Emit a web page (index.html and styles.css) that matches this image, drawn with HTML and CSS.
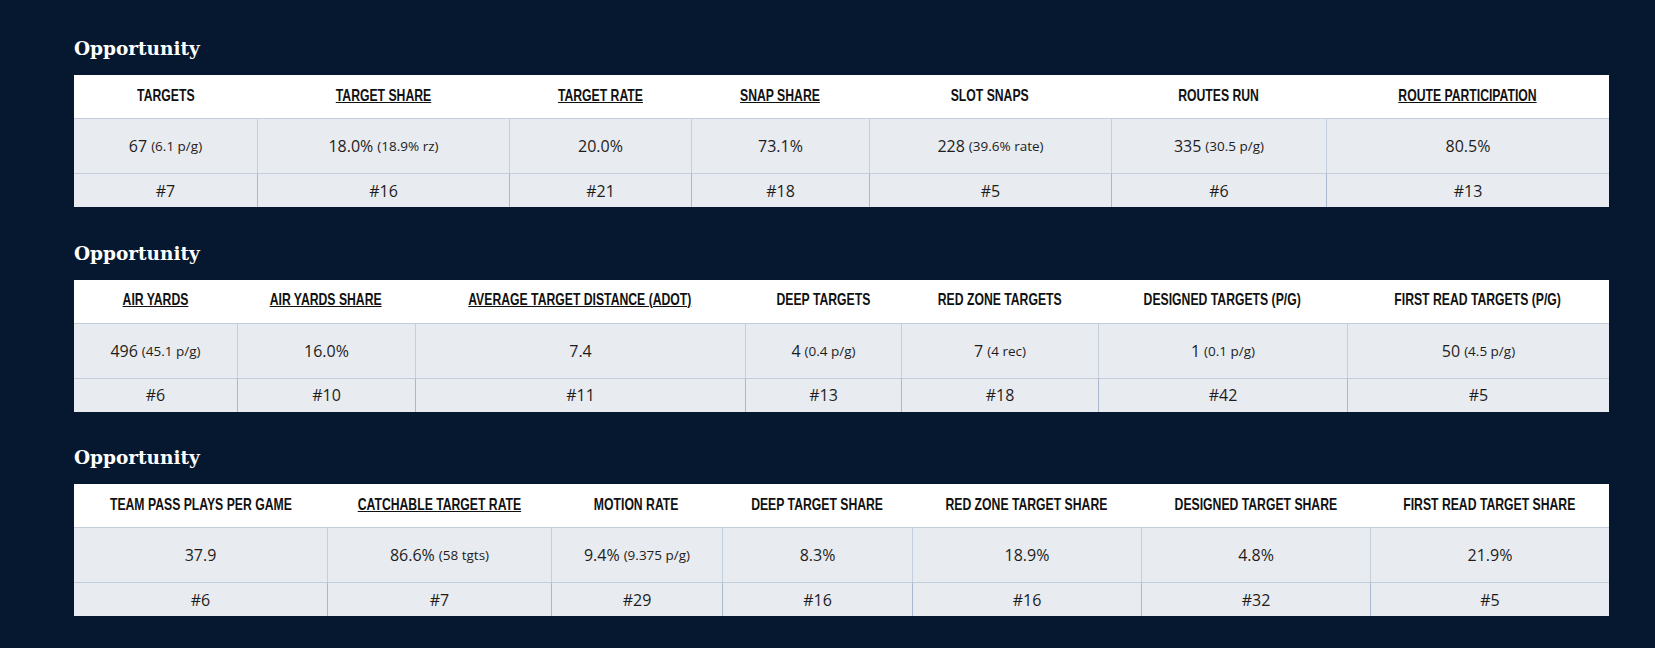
FILE: index.html
```html
<!DOCTYPE html>
<html lang="en">
<head>
<meta charset="utf-8">
<title>Opportunity</title>
<link rel="stylesheet" href="styles.css">
</head>
<body>
<main class="page">
  <section class="block">
    <h2 class="block-title">Opportunity</h2>
    <div class="stats stats--one">
      <div class="head"><span class="label">TARGETS</span></div>
      <div class="head"><a class="label tip">TARGET SHARE</a></div>
      <div class="head"><a class="label tip">TARGET RATE</a></div>
      <div class="head"><a class="label tip">SNAP SHARE</a></div>
      <div class="head"><span class="label">SLOT SNAPS</span></div>
      <div class="head"><span class="label">ROUTES RUN</span></div>
      <div class="head"><a class="label tip">ROUTE PARTICIPATION</a></div>

      <div class="val first">67 <small>(6.1 p/g)</small></div>
      <div class="val">18.0% <small>(18.9% rz)</small></div>
      <div class="val">20.0%</div>
      <div class="val">73.1%</div>
      <div class="val">228 <small>(39.6% rate)</small></div>
      <div class="val">335 <small>(30.5 p/g)</small></div>
      <div class="val">80.5%</div>

      <div class="rank first">#7</div>
      <div class="rank">#16</div>
      <div class="rank">#21</div>
      <div class="rank">#18</div>
      <div class="rank">#5</div>
      <div class="rank">#6</div>
      <div class="rank">#13</div>
    </div>
  </section>

  <section class="block">
    <h2 class="block-title">Opportunity</h2>
    <div class="stats stats--two">
      <div class="head"><a class="label tip">AIR YARDS</a></div>
      <div class="head"><a class="label tip">AIR YARDS SHARE</a></div>
      <div class="head"><a class="label tip">AVERAGE TARGET DISTANCE (ADOT)</a></div>
      <div class="head"><span class="label">DEEP TARGETS</span></div>
      <div class="head"><span class="label">RED ZONE TARGETS</span></div>
      <div class="head"><span class="label">DESIGNED TARGETS (P/G)</span></div>
      <div class="head"><span class="label">FIRST READ TARGETS (P/G)</span></div>

      <div class="val first">496 <small>(45.1 p/g)</small></div>
      <div class="val">16.0%</div>
      <div class="val">7.4</div>
      <div class="val">4 <small>(0.4 p/g)</small></div>
      <div class="val">7 <small>(4 rec)</small></div>
      <div class="val">1 <small>(0.1 p/g)</small></div>
      <div class="val">50 <small>(4.5 p/g)</small></div>

      <div class="rank first">#6</div>
      <div class="rank">#10</div>
      <div class="rank">#11</div>
      <div class="rank">#13</div>
      <div class="rank">#18</div>
      <div class="rank">#42</div>
      <div class="rank">#5</div>
    </div>
  </section>

  <section class="block">
    <h2 class="block-title">Opportunity</h2>
    <div class="stats stats--three">
      <div class="head"><span class="label">TEAM PASS PLAYS PER GAME</span></div>
      <div class="head"><a class="label tip">CATCHABLE TARGET RATE</a></div>
      <div class="head"><span class="label">MOTION RATE</span></div>
      <div class="head"><span class="label">DEEP TARGET SHARE</span></div>
      <div class="head"><span class="label">RED ZONE TARGET SHARE</span></div>
      <div class="head"><span class="label">DESIGNED TARGET SHARE</span></div>
      <div class="head"><span class="label">FIRST READ TARGET SHARE</span></div>

      <div class="val first">37.9</div>
      <div class="val">86.6% <small>(58 tgts)</small></div>
      <div class="val">9.4% <small>(9.375 p/g)</small></div>
      <div class="val">8.3%</div>
      <div class="val">18.9%</div>
      <div class="val">4.8%</div>
      <div class="val">21.9%</div>

      <div class="rank first">#6</div>
      <div class="rank">#7</div>
      <div class="rank">#29</div>
      <div class="rank">#16</div>
      <div class="rank">#16</div>
      <div class="rank">#32</div>
      <div class="rank">#5</div>
    </div>
  </section>
</main>
</body>
</html>
```
FILE: styles.css
```css
html, body {
  margin: 0;
  padding: 0;
  background: #061830;
}

.page {
  padding: 37px 46px 0 74px;
  font-family: "Open Sans", "Liberation Sans", sans-serif;
  color: #1d1d1d;
}

.block {
  margin: 0 0 34.5px;
}

.block-title {
  margin: 0 0 14px;
  font-family: "DejaVu Serif", serif;
  font-weight: bold;
  font-size: 18.5px;
  line-height: 24px;
  color: #ffffff;
}

.stats {
  display: grid;
  grid-template-rows: 43px 55px 34px;
  width: 1535px;
}

.stats--one   { grid-template-columns: 183px 252px 182px 178px 242px 215px 283px; }
.stats--two   { grid-template-columns: 163px 178px 330px 156px 197px 249px 262px; }
.stats--three { grid-template-columns: 253px 224px 171px 190px 229px 229px 239px; }

.head {
  background: #ffffff;
  display: flex;
  align-items: center;
  justify-content: center;
  padding-bottom: 4px;
  white-space: nowrap;
}

.label {
  display: inline-block;
  transform: scaleX(0.74);
  font-family: "Liberation Sans", "Arial", sans-serif;
  font-weight: bold;
  font-size: 16.5px;
  line-height: 18px;
  color: #111111;
}

.tip {
  text-decoration: underline;
  text-underline-offset: 1px;
  text-decoration-thickness: 1px;
}

.val,
.rank {
  background: #e8ebf0;
  display: flex;
  align-items: center;
  justify-content: center;
  border-top: 1px solid #c3cddb;
  border-left: 1px solid #c6cfdc;
  font-size: 16px;
  white-space: nowrap;
}

.rank {
  border-left-color: #a9b8cd;
}

.first {
  border-left: 0;
}

.val small {
  font-size: 13.5px;
  margin-left: 4px;
}
```
